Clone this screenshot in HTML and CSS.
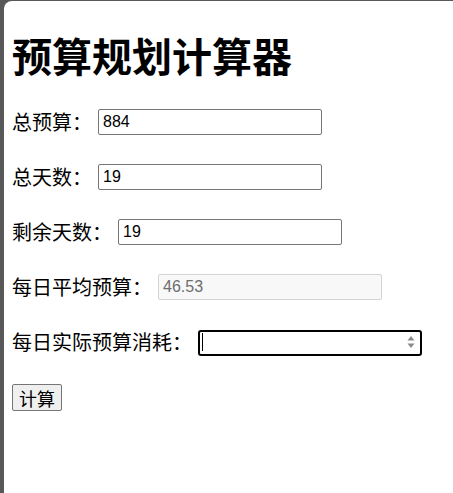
FILE: index.html
```html
<!DOCTYPE html>
<html>
<head>
  <meta charset="utf-8">
  <title>预算规划计算器</title>
  <meta name="viewport" content="width=device-width, initial-scale=1" />
  <link rel="stylesheet" href="styles.css">
</head>
<body>
  <div class="page">
    <h1>预算规划计算器</h1>

    <div class="row"><label for="total">总预算：</label><input class="field" type="text" id="total" value="884"></div>
    <div class="row"><label for="days">总天数：</label><input class="field" type="text" id="days" value="19"></div>
    <div class="row"><label for="left">剩余天数：</label><input class="field" type="text" id="left" value="19"></div>
    <div class="row"><label for="avg">每日平均预算：</label><input class="field" type="text" id="avg" value="46.53" disabled></div>
    <div class="row">
      <label for="spend">每日实际预算消耗：</label>
      <span class="active-wrap">
        <input class="field active" type="text" id="spend">
        <span class="caret"></span>
        <svg class="spin" width="8" height="14" viewBox="0 0 8 14">
          <path d="M4 1 L7.5 5.5 L0.5 5.5 Z" fill="#8a8a8a"/>
          <path d="M4 13 L7.5 8.5 L0.5 8.5 Z" fill="#8a8a8a"/>
        </svg>
      </span>
    </div>

    <button class="calc" id="calc">计算</button>
  </div>

  <script>
    document.getElementById("calc").addEventListener("click", () => {
      const total = parseFloat(document.getElementById("total").value) || 0;
      const left = parseFloat(document.getElementById("left").value) || 0;
      const spent = parseFloat(document.getElementById("spend").value) || 0;
      const days = left > 0 ? left : 1;
      document.getElementById("avg").value = ((total - spent) / days).toFixed(2);
    });
  </script>
</body>
</html>
```

FILE: styles.css
```css
body {
  margin: 0;
  background: #585858;
  font-family: "Noto Sans CJK SC", "Liberation Sans", sans-serif;
  color: #000;
}

.page {
  margin: 1px 0 0 4px;
  min-height: calc(100vh - 1px);
  box-sizing: border-box;
  padding: 8px;
  background: #fff;
  border-top-left-radius: 8px;
}

h1 {
  margin: 22px 0 30px;
  font-size: 40px;
  line-height: 48px;
  font-weight: bold;
}

.row {
  display: flex;
  align-items: center;
  height: 26px;
  margin-bottom: 29px;
}

.row label {
  font-size: 20px;
  line-height: 26px;
  margin-right: 6px;
}

.field {
  box-sizing: border-box;
  width: 224px;
  height: 26px;
  padding: 1px 4px;
  border: 1px solid #767676;
  border-radius: 2px;
  font-family: "Liberation Sans", Arial, sans-serif;
  font-size: 16px;
  color: #000;
  background: #fff;
}

.field:disabled {
  background: #f8f8f8;
  border-color: #d4d4d4;
  color: #6d6d6d;
}

.active-wrap {
  position: relative;
  display: inline-block;
  height: 26px;
}

.field.active {
  border: 2px solid #000;
  border-radius: 3px;
  outline: none;
}

.caret {
  position: absolute;
  left: 4px;
  top: 4px;
  width: 1px;
  height: 18px;
  background: #000;
}

.spin {
  position: absolute;
  right: 7px;
  top: 6px;
}

.calc {
  box-sizing: border-box;
  height: 27px;
  padding: 0 6px;
  font-family: "Noto Sans CJK SC", sans-serif;
  font-size: 18px;
  line-height: 24px;
  color: #000;
  background: #efefef;
  border: 1px solid #767676;
  border-radius: 2px;
}
```
